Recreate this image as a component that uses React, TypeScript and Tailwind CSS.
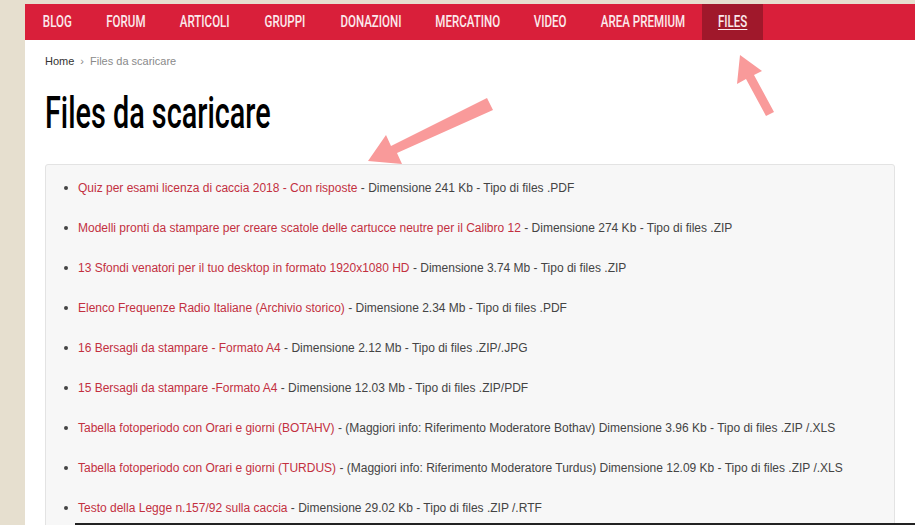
type NavItem = { label: string; width: string };

const navItems: NavItem[] = [
  { label: "BLOG", width: "w-[64px]" },
  { label: "FORUM", width: "w-[74px]" },
  { label: "ARTICOLI", width: "w-[84px]" },
  { label: "GRUPPI", width: "w-[76px]" },
  { label: "DONAZIONI", width: "w-[95px]" },
  { label: "MERCATINO", width: "w-[99px]" },
  { label: "VIDEO", width: "w-[67px]" },
  { label: "AREA PREMIUM", width: "w-[118px]" },
  { label: "FILES", width: "w-[61px]" },
];

type FileRow = { title: string; info: string };

const files: FileRow[] = [
  { title: "Quiz per esami licenza di caccia 2018 - Con risposte", info: " - Dimensione 241 Kb - Tipo di files .PDF" },
  { title: "Modelli pronti da stampare per creare scatole delle cartucce neutre per il Calibro 12", info: " - Dimensione 274 Kb - Tipo di files .ZIP" },
  { title: "13 Sfondi venatori per il tuo desktop in formato 1920x1080 HD", info: " - Dimensione 3.74 Mb - Tipo di files .ZIP" },
  { title: "Elenco Frequenze Radio Italiane (Archivio storico)", info: " - Dimensione 2.34 Mb - Tipo di files .PDF" },
  { title: "16 Bersagli da stampare - Formato A4", info: " - Dimensione 2.12 Mb - Tipo di files .ZIP/.JPG" },
  { title: "15 Bersagli da stampare -Formato A4", info: " - Dimensione 12.03 Mb - Tipo di files .ZIP/PDF" },
  { title: "Tabella fotoperiodo con Orari e giorni (BOTAHV)", info: " - (Maggiori info: Riferimento Moderatore Bothav) Dimensione 3.96 Kb - Tipo di files .ZIP /.XLS" },
  { title: "Tabella fotoperiodo con Orari e giorni (TURDUS)", info: " - (Maggiori info: Riferimento Moderatore Turdus) Dimensione 12.09 Kb - Tipo di files .ZIP /.XLS" },
  { title: "Testo della Legge n.157/92 sulla caccia", info: " - Dimensione 29.02 Kb - Tipo di files .ZIP /.RTF" },
];

// no Oswald offline: Roboto squeezed horizontally stands in for it
const condensed = { fontFamily: 'Roboto, "Liberation Sans", sans-serif' };

export default function App() {
  return (
    <div className="relative h-[525px] w-[915px] overflow-hidden bg-[#e6dfcf] pt-1 pl-[25px]" style={{ fontFamily: '"Liberation Sans", Arial, sans-serif' }}>
      <div className="h-full bg-white">
        <nav className="flex h-9 bg-[#d91f3a]">
          {navItems.map((item) => {
            const active = item.label === "FILES";
            return (
              <a
                key={item.label}
                className={
                  "flex h-full shrink-0 items-center justify-center " +
                  item.width +
                  (active ? " bg-[#a0182b]" : "")
                }
              >
                <span
                  className={
                    "inline-block shrink-0 scale-x-[0.68] whitespace-nowrap text-[17px] font-medium text-[#fbe9ec]" +
                    (active ? " underline underline-offset-2" : "")
                  }
                  style={condensed}
                >
                  {item.label}
                </span>
              </a>
            );
          })}
        </nav>

        <div className="px-5">
          <div className="flex items-center gap-[6px] pt-[13px] text-[11px]">
            <span className="text-[#333]">Home</span>
            <span className="text-[11px] text-[#888]">›</span>
            <span className="text-[#8a8a8a]">Files da scaricare</span>
          </div>

          <h1 className="mt-[19px] h-[48px] whitespace-nowrap text-[45px] leading-[48px] text-black" style={condensed}>
            <span className="inline-block origin-left scale-x-[0.64] font-medium">Files da scaricare</span>
          </h1>

          <div className="mt-[27px] rounded-[3px] border border-[#e3e3e3] bg-[#f7f7f7] pb-4 pl-[18px] pt-[16px]">
            <ul className="flex flex-col gap-[25px] text-[12px] leading-[15px]">
              {files.map((f) => (
                <li key={f.title} className="flex items-center">
                  <span className="mr-[10px] h-[4px] w-[4px] rounded-full bg-[#444]" />
                  <span className="text-[#c3303f]">{f.title}</span>
                  <span className="whitespace-pre text-[#444]">{f.info}</span>
                </li>
              ))}
            </ul>
          </div>
        </div>
      </div>

      <svg className="pointer-events-none absolute left-0 top-0" width="915" height="525">
        <g fill="#f99a9a">
          <polygon points="487,98 493,110 397,153 402,164 368,161 386,135 391,146" />
          <polygon points="774,112 766,116 746,79 737,84 740,55 762,71 754,75" />
        </g>
      </svg>
      <div className="absolute bottom-0 left-[75px] right-0 h-[2px] bg-[#222]" />
    </div>
  );
}
